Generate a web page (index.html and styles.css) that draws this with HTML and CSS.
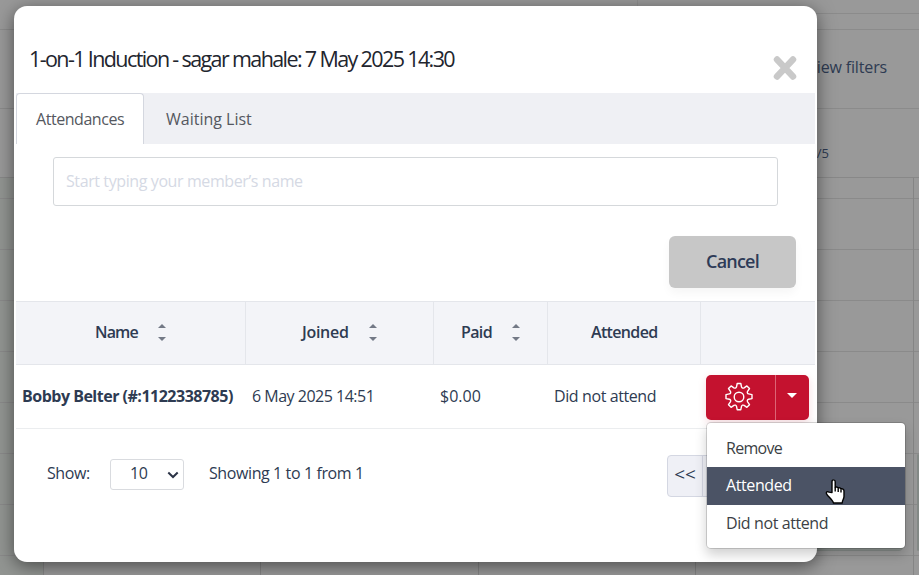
FILE: index.html
```html
<!DOCTYPE html>
<html lang="en">

<head>
    <meta charset="utf-8">
    <title>Attendances</title>
    <link rel="stylesheet" href="styles.css">
</head>

<body>
    <!-- calendar behind the dialog -->
    <div class="page">
        <div class="page-top"><div></div><div></div></div>
        <div class="page-filters"><span>View filters</span></div>
        <div class="page-days"><span>8/5</span></div>
        <div class="calendar">
            <div class="day booked"></div>
            <div class="day"></div>
            <div class="day"></div>
            <div class="day"></div>
            <div class="day"><div class="event"></div></div>
            <div class="day"><div class="event"></div></div>
        </div>
    </div>

    <div class="modal">
        <div class="modal-header">
            <h1>1-on-1 Induction - sagar mahale: 7 May 2025 14:30</h1>
            <svg class="close" viewBox="0 0 24 26"><path d="M4 4.500l16 17M20 4.500l-16 17" /></svg>
        </div>
        <div class="tabs">
            <div class="tab active">Attendances</div>
            <div class="tab">Waiting List</div>
        </div>
        <div class="search">
            <input type="text" placeholder="Start typing your member’s name">
        </div>
        <div class="actions">
            <button class="cancel">Cancel</button>
        </div>
        <table>
            <thead>
                <tr>
                    <th class="c-name"><div><span>Name</span><i class="sort"></i></div></th>
                    <th class="c-joined"><div><span>Joined</span><i class="sort"></i></div></th>
                    <th class="c-paid"><div><span>Paid</span><i class="sort"></i></div></th>
                    <th class="c-attended"><div><span>Attended</span></div></th>
                    <th></th>
                </tr>
            </thead>
            <tbody>
                <tr>
                    <td><b>Bobby Belter (#:1122338785)</b></td>
                    <td class="date">6 May 2025 14:51</td>
                    <td class="price">$0.00</td>
                    <td>Did not attend</td>
                    <td class="c-menu">
                        <div class="btn-group">
                            <div class="btn-gear">
                                <svg viewBox="0 0 30 30">
                                    <path d="M13.200 1.500h3.600l.7 3.300q.2.900 1 1.200t1.600-.2l2.800-1.900 2.600 2.600-1.900 2.800q-.5.800-.2 1.600t1.200 1l3.400.7v4l-3.400.7q-.9.200-1.200 1t.2 1.600l1.900 2.800-2.600 2.600-2.800-1.900q-.8-.5-1.600-.2t-1 1.200l-.7 3.300h-3.600l-.7-3.300q-.2-.9-1-1.200t-1.600.2l-2.800 1.900-2.600-2.600 1.900-2.800q.5-.8.200-1.600t-1.200-1l-3.400-.7v-4l3.400-.7q.9-.2 1.200-1t-.2-1.600l-1.900-2.800 2.600-2.600 2.800 1.900q.8.500 1.600.2t1-1.200z" />
                                    <circle cx="15" cy="15" r="4.800" />
                                </svg>
                            </div>
                            <div class="btn-caret"><i></i></div>
                            <ul class="dropdown">
                                <li>Remove</li>
                                <li class="hover">Attended</li>
                                <li>Did not attend</li>
                            </ul>
                            <svg class="pointer" viewBox="0 0 20 26">
                                <path d="M7 14V3.200C7 .7 10.200.7 10.200 3.200V9c1-.9 2.800-.5 3 .7.900-.8 2.500-.4 2.800.8 1.200-.6 3 .1 3 1.900V18c0 2.200-1.800 3.900-1.800 6.500H8.500C7.800 21.500 2.700 17.800 1.500 15.200c-.7-1.500.9-2.800 2.500-1.600z" />
                                <path d="M10.200 9v4M13.200 10v3.500M16 11v3" />
                            </svg>
                        </div>
                    </td>
                </tr>
            </tbody>
        </table>
        <div class="footer">
            <label>Show:</label>
            <div class="select">
                <span>10</span>
                <svg viewBox="0 0 12 8"><path d="M1.300 1.500l4.700 4.500 4.700-4.500" /></svg>
            </div>
            <div class="showing">Showing 1 to 1 from 1</div>
            <div class="pager">
                <div>&lt;&lt;</div>
                <div></div>
            </div>
        </div>
    </div>
</body>

</html>
```

FILE: styles.css
```css
* {
    box-sizing: border-box;
}

body {
    margin: 0;
    width: 919px;
    height: 575px;
    overflow: hidden;
    position: relative;
    background-color: #999;
    color: #2e3b52;
    font-family: "Open Sans", "Noto Sans", sans-serif;
    font-size: 16px;
    letter-spacing: -0.4px;
}

/* page behind */
.page-top {
    display: flex;
    height: 30px;
    border-bottom: 1px solid #8b8b8b;
}

.page-top div {
    width: 638px;
    border-right: 1px solid #8f8f8f;
}

.page-top div + div {
    width: 281px;
    height: 14px;
    border-right: 0;
    border-bottom: 1px solid #8b8b8b;
}

.page-filters {
    display: flex;
    justify-content: flex-end;
    height: 79px;
    border-bottom: 1px solid #8b8b8b;
    line-height: 75px;
    padding-right: 32px;
    letter-spacing: -0.15px;
}

.page-days {
    display: flex;
    justify-content: flex-end;
    height: 69px;
    border-bottom: 1px solid #888;
    padding: 35px 90px 0 0;
    font-size: 13px;
    line-height: 18px;
    letter-spacing: 0;
}

.calendar {
    display: grid;
    grid-template-columns: 44px 217px 218px 217px 218px 1fr;
    height: 397px;
}

.day {
    display: flex;
    align-items: flex-start;
    border-right: 1px solid #858585;
    background-image: repeating-linear-gradient(transparent 0 20px, #8a8a8a 20px 21px, transparent 21px 51px);
    background-size: 100% 51px;
}

.day.booked {
    background-color: #929592;
}

.event {
    width: 100%;
    height: 97px;
    margin: 276px 10px 0 3px;
    background-color: #8b928f;
    border: 1px solid #838986;
    border-radius: 4px;
}

/* dialog */
.modal {
    position: absolute;
    left: 14px;
    top: 6px;
    width: 803px;
    height: 556px;
    padding: 0 2px;
    background-color: #fff;
    border-radius: 13px;
    box-shadow: 0 4px 18px rgba(0, 0, 0, .5);
}

.modal-header {
    height: 87px;
    display: flex;
    justify-content: space-between;
    padding: 37px 18px 0 13px;
}

h1 {
    margin: 0;
    font-size: 21.5px;
    font-weight: 400;
    line-height: 32px;
    letter-spacing: -1.6px;
    word-spacing: -0.1px;
    color: #22252e;
    white-space: nowrap;
}

.close {
    width: 24px;
    height: 26px;
    margin-top: 12px;
    fill: none;
    stroke: #c9c9c9;
    stroke-width: 6.500;
    stroke-linecap: round;
}

.tabs {
    display: flex;
    height: 51px;
    background-color: #eff0f4;
    color: #555860;
    line-height: 52px;
}

.tab {
    padding-left: 22px;
    letter-spacing: 0;
}

.tab.active {
    width: 128px;
    padding-left: 19px;
    background-color: #fff;
    border: 1px solid #d4d7df;
    border-bottom: 0;
    border-radius: 4px 4px 0 0;
    line-height: 50px;
    letter-spacing: -0.45px;
}

.search {
    padding: 13px 37px 0;
}

.search input {
    display: block;
    width: 100%;
    height: 49px;
    padding: 0 12px 2px;
    border: 1px solid #d5d8db;
    border-radius: 3px;
    font: inherit;
    letter-spacing: inherit;
}

.search input::placeholder {
    color: #d5d9e4;
}

.actions {
    display: flex;
    justify-content: flex-end;
    padding: 30px 19px 13px;
}

.cancel {
    width: 127px;
    height: 52px;
    padding: 0 0 2px;
    border: 0;
    border-radius: 6px;
    background-color: #c7c7c7;
    color: #2e3b57;
    font: inherit;
    font-size: 18px;
    font-weight: 600;
    letter-spacing: -0.8px;
    box-shadow: 0 5px 10px rgba(0, 0, 0, .04);
}

table {
    width: 799px;
    table-layout: fixed;
    border-collapse: separate;
    border-spacing: 0;
}

th {
    height: 64px;
    padding: 0 0 2px;
    background-color: #f3f4f8;
    border: solid #e4e6eb;
    border-width: 1px 1px 1px 0;
    font-weight: 600;
    letter-spacing: -0.65px;
}

th:last-child {
    border-right: 0;
}

th div {
    display: flex;
    align-items: center;
}

.c-name {
    width: 230px;
    padding-left: 79px;
    letter-spacing: -0.85px;
}

.c-joined {
    width: 188px;
    padding-left: 56px;
    letter-spacing: -0.3px;
}

.c-paid {
    width: 114px;
    padding-left: 27px;
}

.c-attended {
    width: 153px;
    padding-left: 43px;
}

.sort {
    width: 8px;
    height: 17px;
    margin-left: 20px;
    display: flex;
    flex-direction: column;
    justify-content: space-between;
}

.sort::before,
.sort::after {
    content: "";
    border: 4px solid transparent;
    border-top: 0;
    border-bottom-color: #737986;
}

.sort::after {
    border-top: 4px solid #737986;
    border-bottom: 0;
}

td {
    height: 64px;
    padding: 0 0 2px 6px;
    border-bottom: 1px solid #ebedef;
    white-space: nowrap;
}

td b,
td.date {
    letter-spacing: -0.5px;
}

td.price {
    letter-spacing: 0;
}

td.c-menu {
    padding: 1px 0 0 5px;
}

.btn-group {
    position: relative;
    display: flex;
    width: 103px;
    height: 45px;
    color: #fff;
    background-color: #c4122f;
    border-radius: 5px;
    box-shadow: 0 3px 8px rgba(196, 18, 47, .15);
}

.btn-gear {
    width: 70px;
    display: flex;
    justify-content: center;
    align-items: center;
    border-right: 1px solid #dc6475;
}

.btn-gear svg {
    width: 30px;
    height: 30px;
    margin: 0 3px 1px 0;
    fill: none;
    stroke: #fff;
    stroke-width: 1.400;
    stroke-linejoin: round;
}

.btn-caret {
    flex: 1;
    display: flex;
    justify-content: center;
    align-items: center;
}

.btn-caret i {
    border: 5px solid transparent;
    border-top-color: #fff;
    border-bottom: 0;
    margin: -4px 1px 0 0;
}

.dropdown {
    position: absolute;
    z-index: 5;
    top: 47px;
    left: 0;
    width: 200px;
    height: 127px;
    margin: 0;
    padding: 6px 0;
    list-style: none;
    background-color: #fff;
    background-clip: padding-box;
    border: 1px solid rgba(0, 0, 0, .15);
    border-radius: 5px;
    box-shadow: 0 6px 12px rgba(0, 0, 0, .18);
    color: #3c3f45;
}

.dropdown li {
    height: 38px;
    line-height: 37px;
    padding-left: 19px;
}

.dropdown li:first-child {
    line-height: 39px;
    letter-spacing: -0.7px;
}

.dropdown li.hover {
    background-color: #4b5365;
    color: #fff;
}

.pointer {
    position: absolute;
    z-index: 6;
    left: 119px;
    top: 103px;
    width: 20px;
    height: 27px;
    fill: #fff;
    stroke: #000;
    stroke-width: 1.400;
    stroke-linejoin: round;
}

.footer {
    display: flex;
    padding-top: 26px;
    line-height: 36px;
}

label {
    width: 94px;
    padding-left: 31px;
}

.select {
    display: flex;
    align-items: center;
    justify-content: space-between;
    width: 74px;
    height: 31px;
    margin-top: 4px;
    padding: 0 4px 0 19px;
    border: 1px solid #d9dbdf;
    border-radius: 3px;
}

.select span {
    margin-top: -3px;
}

.select svg {
    width: 12px;
    height: 8px;
    fill: none;
    stroke: #2b3346;
    stroke-width: 2;
}

.showing {
    padding-left: 25px;
}

.pager {
    display: flex;
    height: 42px;
    margin: 0 20px 0 auto;
    width: 128px;
    border: 1px solid #d4d7e2;
    border-radius: 4px;
    background-color: #eff0f6;
}

.pager div {
    width: 35px;
    font-size: 19px;
    letter-spacing: 0;
    text-align: center;
    border-right: 1px solid #d4d7e2;
}
```
